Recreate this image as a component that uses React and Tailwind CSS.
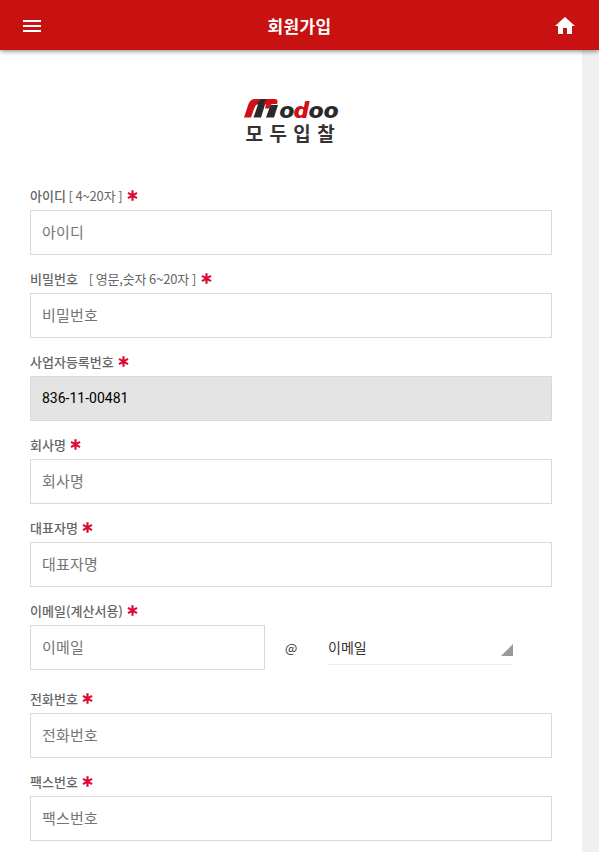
import React from 'react';

const fields = [
  { label: '아이디', hint: '[ 4~20자 ]', placeholder: '아이디' },
  { label: '비밀번호', hint: '\u00a0\u00a0\u00a0[ 영문,숫자 6~20자 ]', placeholder: '비밀번호' },
  { label: '사업자등록번호', value: '836-11-00481', placeholder: '' },
  { label: '회사명', placeholder: '회사명' },
  { label: '대표자명', placeholder: '대표자명' },
];

const contactFields = [
  { label: '전화번호', placeholder: '전화번호' },
  { label: '팩스번호', placeholder: '팩스번호' },
];

const inputClass =
  'block h-[45px] w-full border border-[#d9d9d9] bg-white px-[11px] text-[15px] tracking-[0.2px] text-black outline-none placeholder:text-[#757575] read-only:bg-[#e4e4e4] read-only:pb-[2px] read-only:text-[14px] read-only:tracking-normal';

function Required() {
  return (
    <svg className="mb-px ml-[4.5px] h-[11px] w-[11px] shrink-0" viewBox="0 0 11 11" stroke="#dc0a32" strokeWidth="2.2">
      <path d="M5.5 0.3v10.4M1 2.9l9 5.2M10 2.9l-9 5.2" />
    </svg>
  );
}

function Label({ text, hint }) {
  return (
    <div className="flex h-[30px] items-center pt-[2px] font-['Noto_Sans_CJK_KR',sans-serif] text-[13px] leading-[28px] text-[#666]">
      <span className="font-medium">{text}</span>
      {hint && <span className="ml-[2.5px] tracking-[-0.15px]">{hint}</span>}
      <Required />
    </div>
  );
}

function Field({ label, hint, placeholder, value }) {
  return (
    <div className="h-[83px]">
      <Label text={label} hint={hint} />
      <input className={inputClass} placeholder={placeholder} defaultValue={value} readOnly={Boolean(value)} />
    </div>
  );
}

function Logo() {
  return (
    <svg className="h-[50px] w-[100px]" viewBox="0 0 100 50">
      {/* slanted ribbon mark */}
      <path d="M3 21.500L7.500 8Q9.500 3 14 3H21L16 8Q14 10 13 13L10 21.500z" fill="#d01015" />
      <path d="M20 3h7.500q-2.500 1-3 4l-4.500 14.500h-7.500L17 8.500h-2z" fill="#2a2a2a" />
      <path d="M25.500 3h8q3.500 0 3 3l-.5 2H32.500q-2 0-3 1l-1 3.500H24l1-4h-2.500z" fill="#d01015" />
      <path d="M29.500 9h7.500l-4 12.500h-8z" fill="#2a2a2a" />
      <g fontFamily="Roboto, sans-serif" fontSize="22.500" fontStyle="italic" fontWeight="900" fill="#2a2a2a" transform="translate(38.500 21.500) scale(1.22 1)">
        <text x="0" y="0">o</text>
        <text x="11.700" y="0" fill="#d01015">d</text>
        <text x="24" y="0">oo</text>
      </g>
      <text x="4.500" y="45" fontFamily="Noto Sans CJK KR, sans-serif" fontSize="19" fontWeight="700" letterSpacing="6.4" fill="#333">모두입찰</text>
    </svg>
  );
}

function App() {
  return (
    <div className="h-[852px] overflow-hidden bg-[#f0f0f0] font-['Roboto','Noto_Sans_CJK_KR',sans-serif]">
      <header className="relative flex h-[50px] items-center justify-between bg-[#c81111] pr-[22px] pl-5 text-white shadow-[0_1px_5px_rgba(0,0,0,0.5)]">
        <svg className="mt-[2px] h-6 w-6" viewBox="0 0 24 24" fill="currentColor">
          <path d="M3 18h18v-2H3v2zm0-5h18v-2H3v2zm0-7v2h18V6H3z" />
        </svg>
        <h1 className="pt-[5px] pl-[2px] text-[17px] font-bold tracking-[0.3px]">회원가입</h1>
        <svg className="mt-[2px] h-6 w-6" viewBox="0 0 24 24" fill="currentColor">
          <path d="M10 20v-6h4v6h5v-8h3L12 3 2 12h3v8z" />
        </svg>
      </header>
      <main className="h-[802px] w-[582px] bg-white pl-[30px] pr-[30px]">
        <div className="flex h-[130px] justify-center pt-[46px]">
          <Logo />
        </div>
        <form>
          {fields.map((field) => (
            <Field key={field.label} {...field} />
          ))}
          <div className="h-[88px]">
            <Label text="이메일(계산서용)" />
            <div className="flex">
              <div className="w-[235px]">
                <input className={inputClass} placeholder="이메일" />
              </div>
              <span className="w-[63px] pl-5 font-['Noto_Sans_CJK_KR',sans-serif] text-[13px] leading-[45px] text-[#333]">@</span>
              <div className="flex h-[40px] w-[185px] items-center justify-between border-b border-[#eee] text-[14px] text-[#333]">
                <span className="pt-[8px]">이메일</span>
                <svg className="mt-[10px] h-3 w-3" viewBox="0 0 12 12" fill="#999">
                  <path d="M12 0v12H0z" />
                </svg>
              </div>
            </div>
          </div>
          {contactFields.map((field) => (
            <Field key={field.label} {...field} />
          ))}
        </form>
      </main>
    </div>
  );
}

export default App;
